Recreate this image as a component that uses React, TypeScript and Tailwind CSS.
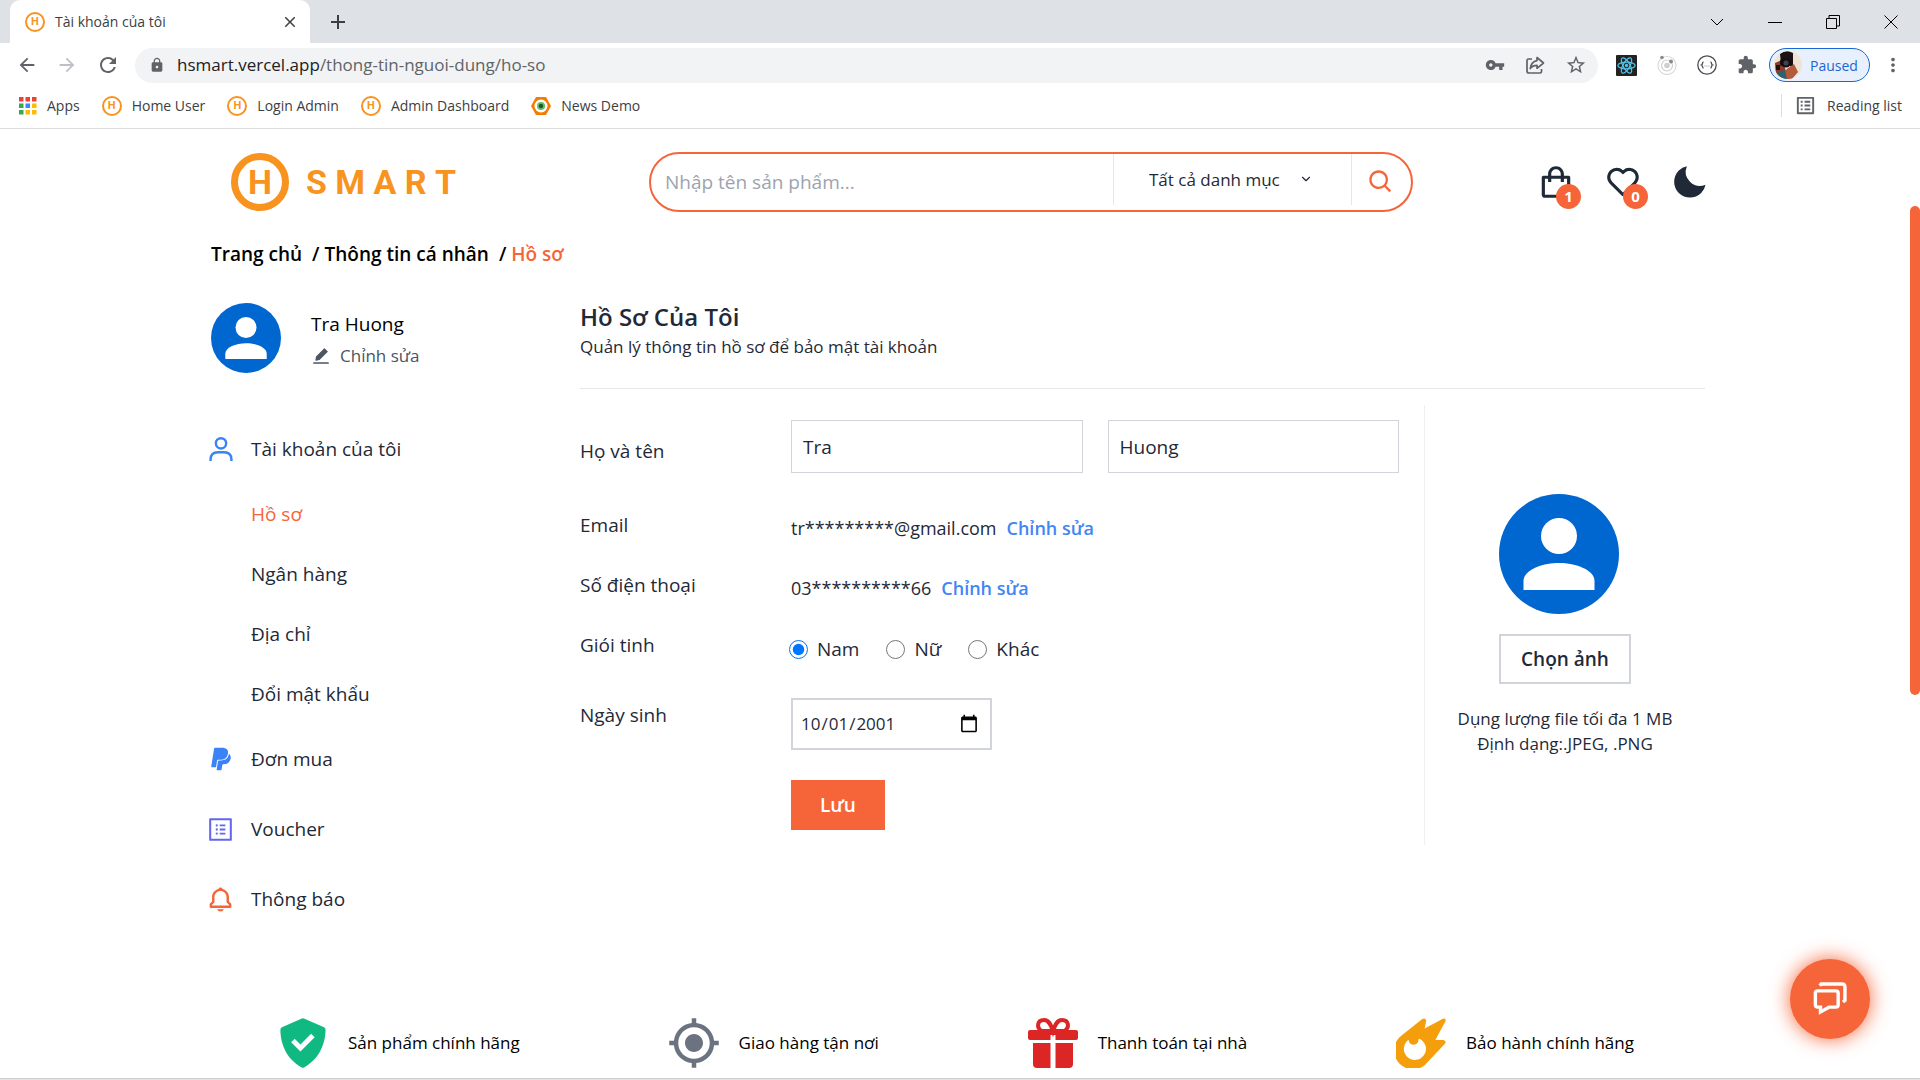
import type { ReactNode } from 'react';
import { BiBell, BiHeart, BiSearch, BiShoppingBag, BiSolidCheckShield, BiSolidMoon } from 'react-icons/bi';
import { AiFillEdit, AiOutlineProfile } from 'react-icons/ai';
import { IoLogoPaypal } from 'react-icons/io5';
import {
  MdArrowBack,
  MdArrowForward,
  MdClose,
  MdAdd,
  MdExtension,
  MdGpsFixed,
  MdLock,
  MdMoreVert,
  MdRefresh,
  MdStarBorder,
  MdVpnKey,
  MdOutlineListAlt,
} from 'react-icons/md';
import { ChevronDown } from 'lucide-react';

function HBadge() {
  return (
    <span className="flex size-5 shrink-0 items-center justify-center rounded-full border-2 border-[#f7931e] font-['Roboto',sans-serif] text-[11px] font-bold leading-none text-[#f7931e]">
      H
    </span>
  );
}

function AppsGrid() {
  const colors = ['#ea4335', '#ea4335', '#ea4335', '#34a853', '#4285f4', '#fbbc04', '#34a853', '#fbbc04', '#fbbc04'];
  return (
    <svg viewBox="0 0 18 18" className="size-[18px]">
      {colors.map((c, i) => (
        <rect key={i} x={(i % 3) * 6.5} y={Math.floor(i / 3) * 6.5} width="4.500" height="4.500" fill={c} />
      ))}
    </svg>
  );
}

function NewsIcon() {
  return (
    <svg viewBox="0 0 20 20" className="size-5">
      <path d="M5 1h10l5 9-5 9H5l-5-9z" fill="#f57c00" />
      <circle cx="10" cy="10" r="6.500" fill="#fff" />
      <circle cx="10" cy="10" r="4" fill="#66bb6a" />
      <circle cx="10" cy="10" r="2.200" fill="#1b5e20" />
    </svg>
  );
}

function ShareIcon() {
  return (
    <svg viewBox="0 0 20 20" className="size-5" fill="none" stroke="#5f6368" strokeWidth="1.700" strokeLinejoin="round">
      <path d="M7 4H3.500A1.500 1.500 0 0 0 2 5.500V16a2 2 0 0 0 2 2h11a1.500 1.500 0 0 0 1.500-1.500V14" />
      <path d="M12 2.500 18.500 8 12 13.300V10.400C8.800 10.400 6.800 11.400 5.300 13.500 5.800 9.500 8 6.300 12 5.600z" />
    </svg>
  );
}

function ReactIcon() {
  return (
    <svg viewBox="0 0 22 22" className="size-[21px]">
      <rect width="22" height="22" rx="1" fill="#222" />
      <g fill="none" stroke="#4fc3e8" strokeWidth="1.300">
        <ellipse cx="11" cy="11" rx="9" ry="3.500" />
        <ellipse cx="11" cy="11" rx="9" ry="3.500" transform="rotate(60 11 11)" />
        <ellipse cx="11" cy="11" rx="9" ry="3.500" transform="rotate(120 11 11)" />
      </g>
      <circle cx="11" cy="11" r="1.800" fill="#4fc3e8" />
    </svg>
  );
}

function OrbitIcon() {
  return (
    <svg viewBox="0 0 20 20" className="size-5" fill="none">
      <circle cx="10" cy="10.500" r="9" stroke="#d9d9d9" strokeWidth="1.200" />
      <circle cx="10" cy="10.500" r="5.500" stroke="#cfcfcf" strokeWidth="1.200" />
      <circle cx="10" cy="10.500" r="2.800" fill="#cfcfcf" />
      <circle cx="5" cy="2.500" r="1.800" fill="#8a8a8a" />
      <circle cx="14" cy="6.500" r="2" fill="#8a8a8a" />
    </svg>
  );
}

function BracesIcon() {
  return (
    <svg viewBox="0 0 20 20" className="size-5" fill="none" stroke="#4a4d51" strokeWidth="1.300">
      <circle cx="10" cy="10" r="9.200" />
      <path d="M6.500 7C5 7 6 9.500 4.500 10 6 10.500 5 13 6.500 13M13.500 7C15 7 14 9.500 15.500 10 14 10.500 15 13 13.500 13" />
      <g fill="#8a8d91" stroke="none">
        <circle cx="8" cy="11" r=".6" />
        <circle cx="10" cy="11" r=".6" />
        <circle cx="12" cy="11" r=".6" />
      </g>
    </svg>
  );
}

function PhotoIcon() {
  return (
    <svg viewBox="0 0 28 28" className="size-7">
      <defs>
        <clipPath id="photo">
          <circle cx="14" cy="14" r="14" />
        </clipPath>
      </defs>
      <g clipPath="url(#photo)">
        <rect width="28" height="28" fill="#f0e2d4" />
        <path d="M6 3Q12-2 19 2L19 12 7 12z" fill="#1d1113" />
        <path d="M1 12 8 9 12 20 8 28H2z" fill="#8a3d2b" />
        <path d="M14 17 20 13 24 21 18 28H8L12 19z" fill="#b4593a" />
        <path d="M3 22 11 19 13 28H4z" fill="#2b6170" />
        <rect x="6" y="8" width="13" height="7" rx="2" fill="#130f14" />
        <circle cx="12" cy="12" r="4.500" fill="#130f14" />
        <circle cx="12" cy="12" r="2.500" fill="#45414c" />
        <path d="M2 14h4v5H2z" fill="#1a1010" />
      </g>
    </svg>
  );
}

function Avatar({ className }: { className: string }) {
  return (
    <svg viewBox="0 0 120 120" className={className} role="img" aria-label="Ảnh đại diện">
      <circle cx="60" cy="60" r="60" fill="#0066d0" />
      <circle cx="60" cy="42" r="18" fill="#fff" />
      <path d="M24.500 96V87C24.500 76 43 69 60 69s35.500 7 35.500 18v9z" fill="#fff" />
    </svg>
  );
}

function UserIcon() {
  return (
    <svg viewBox="0 0 68 70" className="size-6" fill="none" stroke="#3b82f6" strokeWidth="7">
      <circle cx="34" cy="18.500" r="15" />
      <path d="M3.500 70v-4C3.500 52 12 44.500 25 44.500h18C56 44.500 64.500 52 64.500 66v4" />
    </svg>
  );
}

function GiftIcon() {
  return (
    <svg viewBox="0 0 50 50" className="size-[50px]" fill="#dc2626">
      <path d="M2 12h46a2 2 0 0 1 2 2v6a2 2 0 0 1-2 2H27.500V17h-5v5H2a2 2 0 0 1-2-2v-6a2 2 0 0 1 2-2z" />
      <path d="M5 25h17.500v25H9a4 4 0 0 1-4-4zM27.500 25H45v21a4 4 0 0 1-4 4H27.500z" />
      <path
        d="M24 13H14C8 10 9 2 16 2c5 0 7 5 9 11 2-6 4-11 9-11 7 0 8 8 2 11H26"
        fill="none"
        stroke="#dc2626"
        strokeWidth="4"
      />
    </svg>
  );
}

function MeteorIcon() {
  return (
    <svg viewBox="108 232 154 154" className="size-[50px]">
      <path
        fillRule="evenodd"
        fill="#f59e0b"
        d="M126 285 188 236Q199 230 201 241L196 264 251 235Q264 230 260 243L229 300H254Q265 303 258 312L207 366A58 58 0 1 1 126 285ZM147 299A34 34 0 1 0 180 296Q176 297 177 302A15 14 0 0 1 147 299Z"
      />
    </svg>
  );
}

function ChatIcon() {
  return (
    <svg viewBox="131 128 100 100" className="size-[34px]" fill="none" stroke="#fff" strokeWidth="10">
      <path d="M151 139 155 134H216Q225 134 225 143V182L219 187" />
      <path d="M145 154H198Q205 154 205 161V195Q205 202 198 202H178L153 216V202H145Q138 202 138 195V161Q138 154 145 154Z" />
    </svg>
  );
}

function Bookmark({ icon, children }: { icon: ReactNode; children: ReactNode }) {
  return (
    <a href="#" className="flex items-center gap-[10px]">
      {icon}
      {children}
    </a>
  );
}

function Browser() {
  return (
    <div className="font-['Open_Sans',sans-serif] text-[#3c4043]">
      <div className="flex h-[43px] items-center bg-[#dee1e6] pl-[10px]">
        <div className="flex h-full w-[300px] items-center gap-[10px] rounded-t-[10px] bg-white pl-[15px] pr-[11px]">
          <HBadge />
          <span className="flex-1 text-sm">Tài khoản của tôi</span>
          <button aria-label="Đóng thẻ">
            <MdClose size={18} />
          </button>
        </div>
        <button aria-label="Thẻ mới" className="ml-4">
          <MdAdd size={24} />
        </button>
        <div className="ml-auto flex items-center gap-[44px] pr-[22px] text-black">
          <button aria-label="Tìm thẻ">
            <svg viewBox="0 0 14 14" className="size-[14px]" fill="none" stroke="currentColor"><path d="M1 4l6 6 6-6" /></svg>
          </button>
          <button aria-label="Thu nhỏ">
            <svg viewBox="0 0 14 14" className="size-[14px]" fill="none" stroke="currentColor"><path d="M0 7.500h14" /></svg>
          </button>
          <button aria-label="Khôi phục">
            <svg viewBox="0 0 14 14" className="size-[14px]" fill="none" stroke="currentColor"><path d="M.5 3.500h10v10H.5zM3 3V.5h10.500V11H11" /></svg>
          </button>
          <button aria-label="Đóng">
            <svg viewBox="0 0 14 14" className="size-[14px]" fill="none" stroke="currentColor"><path d="M.5.500l13 13M13.500.500l-13 13" /></svg>
          </button>
        </div>
      </div>
      <div className="flex h-11 items-center bg-white pl-4 pr-4 text-[#5f6368]">
        <button aria-label="Quay lại"><MdArrowBack size={22} /></button>
        <button aria-label="Tiến" className="ml-[18px] text-[#bdc1c6]"><MdArrowForward size={22} /></button>
        <button aria-label="Tải lại" className="ml-[18px]"><MdRefresh size={24} /></button>
        <div className="ml-[15px] flex h-[35px] flex-1 items-center rounded-full bg-[#f1f3f4] pl-[14px] pr-[11px]">
          <MdLock size={16} />
          <span className="ml-3 flex-1 text-[17px]">
            <span className="text-[#202124]">hsmart.vercel.app</span>/thong-tin-nguoi-dung/ho-so
          </span>
          <div className="flex items-center gap-5">
            <MdVpnKey size={20} />
            <ShareIcon />
            <MdStarBorder size={22} />
          </div>
        </div>
        <div className="ml-[18px] flex items-center gap-5">
          <ReactIcon />
          <OrbitIcon />
          <BracesIcon />
          <MdExtension size={20} />
        </div>
        <button className="ml-3 flex h-[34px] w-[101px] items-center gap-[8px] rounded-full border border-[#1a66d2] bg-[#e8f0fe] pl-1 text-[14px] text-[#1a66d2]">
          <PhotoIcon />
          Paused
        </button>
        <button aria-label="Trình đơn" className="ml-[12px]"><MdMoreVert size={22} /></button>
      </div>
      <div className="flex h-[42px] items-center border-b border-[#dadce0] bg-white pb-1 pl-[19px] pr-[18px] text-[14px]">
        <div className="flex items-center gap-[22px]">
          <Bookmark icon={<AppsGrid />}>Apps</Bookmark>
          <Bookmark icon={<HBadge />}>Home User</Bookmark>
          <Bookmark icon={<HBadge />}>Login Admin</Bookmark>
          <Bookmark icon={<HBadge />}>Admin Dashboard</Bookmark>
          <Bookmark icon={<NewsIcon />}>News Demo</Bookmark>
        </div>
        <button className="ml-auto flex items-center gap-[10px] border-l border-[#dadce0] pl-3">
          <MdOutlineListAlt size={23} className="text-[#5f6368]" />
          Reading list
        </button>
      </div>
    </div>
  );
}

function CountBadge({ children }: { children: ReactNode }) {
  return (
    <span className="absolute -bottom-2 -right-[6px] flex size-[25px] items-center justify-center rounded-full bg-[#f56539] text-[15px] font-bold leading-none text-white">
      {children}
    </span>
  );
}

function Header() {
  return (
    <header className="-mr-[4px] flex items-center pl-5">
      <a href="#" aria-label="H SMART" className="flex items-center gap-[17px] font-['Roboto',sans-serif] font-bold leading-none text-[#f7931e]">
        <span className="flex size-[58px] items-center justify-center rounded-full border-[7px] border-[#f7931e] text-[34px]">H</span>
        <span className="flex w-[150px] justify-between text-[34px]">
          {['S', 'M', 'A', 'R', 'T'].map((c) => (
            <span key={c}>{c}</span>
          ))}
        </span>
      </a>
      <form className="ml-[193px] flex h-[60px] flex-1 overflow-hidden rounded-full border-2 border-[#f56539]">
        <input
          aria-label="Tìm sản phẩm"
          placeholder="Nhập tên sản phẩm..."
          className="min-w-0 flex-1 pl-[14px] text-[19px] placeholder:text-[#9ca3af] outline-none"
        />
        <div className="relative mb-1 h-[51px] w-[238px] border-l border-[#e5e7eb]">
          <select
            aria-label="Danh mục"
            className="h-full w-full appearance-none pl-[35px] text-[17px] font-medium text-[#1f2937] outline-none"
          >
            <option>Tất cả danh mục</option>
          </select>
          <ChevronDown size={14} className="pointer-events-none absolute right-[38px] top-[18px]" />
        </div>
        <button aria-label="Tìm kiếm" className="h-[51px] w-[60px] border-l border-[#e5e7eb] pl-[15px] pt-1 text-[#f56539]">
          <BiSearch size={28} />
        </button>
      </form>
      <div className="ml-[124px] flex items-center gap-[29px]">
        <button aria-label="Giỏ hàng" className="relative"><BiShoppingBag size={38} /><CountBadge>1</CountBadge></button>
        <button aria-label="Yêu thích" className="relative"><BiHeart size={38} /><CountBadge>0</CountBadge></button>
        <button aria-label="Chế độ tối"><BiSolidMoon size={38} /></button>
      </div>
    </header>
  );
}

function MenuItem({ icon, children }: { icon: ReactNode; children: ReactNode }) {
  return (
    <a href="#" className="flex h-[70px] items-center">
      <span className="-ml-[2px] flex w-[42px]">{icon}</span>
      {children}
    </a>
  );
}

function Sidebar() {
  return (
    <aside className="w-[369px] shrink-0 pt-1">
      <div className="flex items-center gap-[30px]">
        <Avatar className="size-[70px]" />
        <div className="pt-1">
          <p className="text-[19px] font-medium leading-8 text-black">Tra Huong</p>
          <a href="#" className="flex items-center gap-[9px] text-[17px] font-medium leading-8 text-[#4b5563]">
            <AiFillEdit size={20} />
            Chỉnh sửa
          </a>
        </div>
      </div>
      <nav className="mt-[41px] text-[19px] font-medium">
        <MenuItem icon={<UserIcon />}>Tài khoản của tôi</MenuItem>
        <div className="flex flex-col pl-[40px] leading-[60px]">
          <a href="#" className="text-[#f56539]">Hồ sơ</a>
          <a href="#">Ngân hàng</a>
          <a href="#">Địa chỉ</a>
          <a href="#">Đổi mật khẩu</a>
        </div>
        <MenuItem icon={<IoLogoPaypal size={24} color="#3b82f6" />}>Đơn mua</MenuItem>
        <MenuItem icon={<AiOutlineProfile size={29} color="#6366f1" className="-ml-[3px]" />}>Voucher</MenuItem>
        <MenuItem icon={<BiBell size={29} color="#f56539" className="-ml-[3px]" />}>Thông báo</MenuItem>
      </nav>
    </aside>
  );
}

function ProfileForm() {
  const edit = 'ml-[10px] font-semibold text-[#4285f4]';
  return (
    <form className="grid flex-1 grid-cols-[211px_1fr] content-start border-r border-[#f0f0f1] pr-[25px] text-[19px]">
      <label htmlFor="first" className="h-[90px] leading-[92px]">Họ và tên</label>
      <div className="grid h-[90px] grid-cols-2 items-start gap-[25px] pt-[15px]">
        <input id="first" defaultValue="Tra" className="h-[53px] min-w-0 border border-[#d1d5db] pl-[11px]" />
        <input aria-label="Tên" defaultValue="Huong" className="h-[53px] min-w-0 border border-[#d1d5db] pl-[11px]" />
      </div>
      <span className="leading-[60px]">Email</span>
      <p className="h-[60px] text-[18px] leading-[66px]">tr*********@gmail.com<a href="#" className={edit}>Chỉnh sửa</a></p>
      <span className="leading-[60px]">Số điện thoại</span>
      <p className="h-[60px] text-[18px] leading-[66px]">03**********66<a href="#" className={edit}>Chỉnh sửa</a></p>
      <span className="leading-[60px]">Giói tinh</span>
      <div className="-ml-[2px] flex h-[60px] items-center gap-[27px] pt-2">
        {['Nam', 'Nữ', 'Khác'].map((g, i) => (
          <label key={g} className="flex items-center gap-[9px]">
            <input type="radio" name="gender" defaultChecked={i === 0} className="size-[19px]" />
            {g}
          </label>
        ))}
      </div>
      <label htmlFor="birthday" className="leading-[80px]">Ngày sinh</label>
      <div className="pt-[23px]">
        <input
          id="birthday"
          type="date"
          defaultValue="2001-10-01"
          className="h-[52px] w-[201px] border-2 border-[#d1d5db] pl-[7px] pr-[9px] text-[17px] [&::-webkit-calendar-picker-indicator]:size-5"
        />
      </div>
      <button type="button" className="col-start-2 mt-[25px] h-[50px] w-[94px] bg-[#f56539] font-semibold text-white">Lưu</button>
    </form>
  );
}

export default function App() {
  return (
    <div className="flex min-h-screen flex-col bg-white">
      <Browser />
      <main className="relative flex flex-1 flex-col pl-[211px] pr-[215px] pt-[23px] font-['Open_Sans',sans-serif] text-[#1f2937]">
        <Header />
        <nav className="mt-[26px] text-[19px] font-semibold leading-8 text-black">
          <a href="#">Trang chủ</a>
          <span className="ml-[10px] mr-[5px]">/</span>
          <a href="#">Thông tin cá nhân</a>
          <span className="ml-[10px] mr-[5px]">/</span>
          <a href="#" className="text-[#f56539]">Hồ sơ</a>
        </nav>
        <div className="mt-[29px] flex">
          <Sidebar />
          <section className="flex flex-1 flex-col">
            <div className="border-b border-[#e5e7eb] pb-[29px]">
              <h1 className="text-[24px] font-semibold leading-9">Hồ Sơ Của Tôi</h1>
              <p className="text-[17px] leading-6">Quản lý thông tin hồ sơ để bảo mật tài khoản</p>
            </div>
            <div className="mt-4 flex h-[440px]">
              <ProfileForm />
              <div className="flex w-[280px] flex-col items-center justify-center">
                <div className="w-[132px]">
                  <Avatar className="size-[120px]" />
                  <button className="mt-5 h-[50px] w-full border-2 border-[#d1d5db] text-[19px] font-semibold">Chọn ảnh</button>
                </div>
                <p className="mt-[22px] text-center text-[17px] leading-[25px]">
                  Dụng lượng file tối đa 1 MB
                  <br />
                  Định dạng:.JPEG, .PNG
                </p>
              </div>
            </div>
          </section>
        </div>
        <ul className="mb-[10px] mt-auto flex justify-between pl-[67px] pr-[71px] text-[17px] font-medium text-black">
          <li className="flex items-center gap-5"><BiSolidCheckShield size={60} color="#10b981" className="-m-[5px]" />Sản phẩm chính hãng</li>
          <li className="flex items-center gap-5"><MdGpsFixed size={54} color="#6b7280" className="-m-[2px]" />Giao hàng tận nơi</li>
          <li className="flex items-center gap-5"><GiftIcon />Thanh toán tại nhà</li>
          <li className="flex items-center gap-5"><MeteorIcon />Bảo hành chính hãng</li>
        </ul>
        <button aria-label="Trò chuyện" className="absolute bottom-[39px] right-[50px] flex size-20 items-center justify-center rounded-full bg-[#f56539] shadow-[0_0_20px_#f56539]">
          <ChatIcon />
        </button>
        <div className="absolute right-0 top-[77px] h-[489px] w-[10px] rounded-full bg-[#f56539]" />
      </main>
      <div className="h-[2px] border-t border-[#cfcfcf] bg-[#e4e4e4]" />
    </div>
  );
}
